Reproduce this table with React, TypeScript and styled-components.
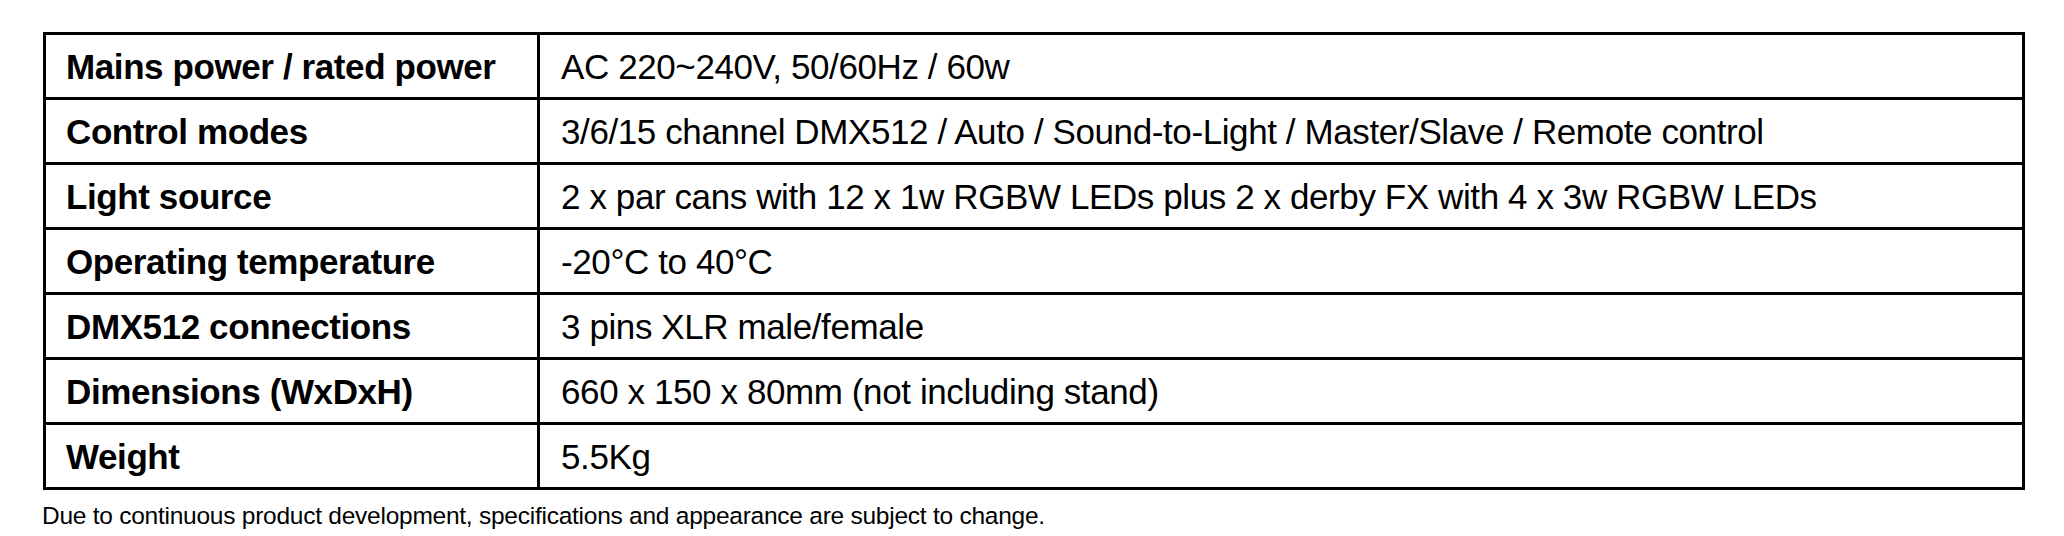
import React from "react";
import styled, { createGlobalStyle } from "styled-components";

const GlobalStyle = createGlobalStyle`
  html, body {
    margin: 0;
    padding: 0;
    background: #ffffff;
  }
  body {
    font-family: "Liberation Sans", Arial, sans-serif;
    color: #000000;
  }
`;

const Page = styled.div`
  display: flex;
  flex-direction: column;
  align-items: flex-start;
  padding: 32px 0 0 43px;
  width: 2064px;
  height: 536px;
  box-sizing: border-box;
`;

const SpecGrid = styled.div`
  display: grid;
  grid-template-columns: 491px 1482px;
  grid-auto-rows: 62px;
  gap: 3px;
  padding: 3px;
  background: #000000;
`;

const Cell = styled.div<{ $label?: boolean }>`
  display: flex;
  align-items: center;
  box-sizing: border-box;
  background: #ffffff;
  padding: 2px 0 0 ${(p) => (p.$label ? "20px" : "21px")};
  font-size: 35px;
  letter-spacing: -0.4px;
  font-weight: ${(p) => (p.$label ? 700 : 400)};
  white-space: nowrap;
`;

const Footnote = styled.p`
  margin: 12px 0 0 -1px;
  font-size: 24.5px;
  letter-spacing: -0.25px;
  line-height: 28px;
  white-space: nowrap;
`;

const specs: [string, string][] = [
  ["Mains power / rated power", "AC 220~240V, 50/60Hz / 60w"],
  ["Control modes", "3/6/15 channel DMX512 / Auto / Sound-to-Light / Master/Slave / Remote control"],
  ["Light source", "2 x par cans with 12 x 1w RGBW LEDs plus 2 x derby FX with 4 x 3w RGBW LEDs"],
  ["Operating temperature", "-20°C to 40°C"],
  ["DMX512 connections", "3 pins XLR male/female"],
  ["Dimensions (WxDxH)", "660 x 150 x 80mm (not including stand)"],
  ["Weight", "5.5Kg"],
];

export default function App() {
  return (
    <>
      <GlobalStyle />
      <Page>
        <SpecGrid>
          {specs.map(([label, value]) => (
            <React.Fragment key={label}>
              <Cell $label>{label}</Cell>
              <Cell>{value}</Cell>
            </React.Fragment>
          ))}
        </SpecGrid>
        <Footnote>
          Due to continuous product development, specifications and appearance are subject to change.
        </Footnote>
      </Page>
    </>
  );
}
